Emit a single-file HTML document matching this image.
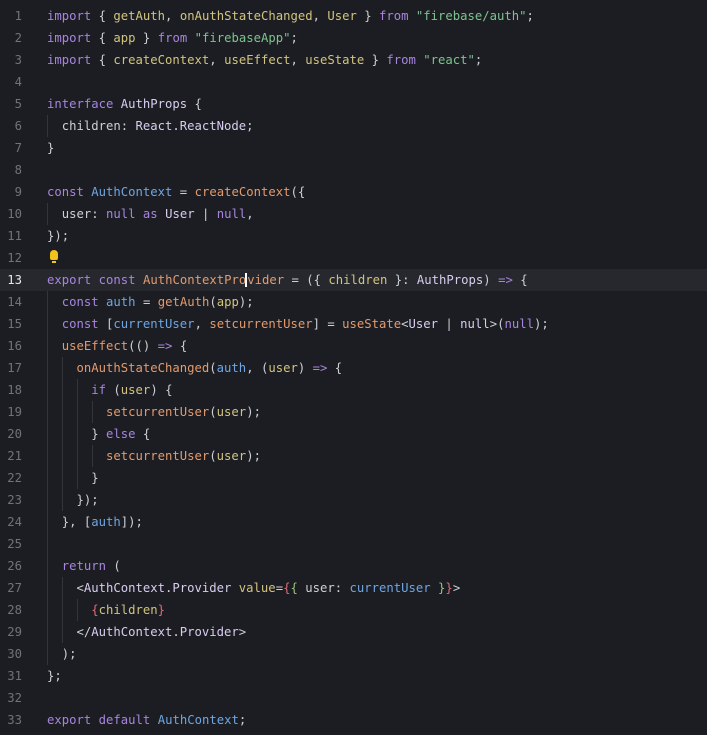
<!DOCTYPE html><html><head><style>
body{margin:0;background:#1c1d22;width:707px;height:735px;overflow:hidden;font-family:"DejaVu Sans Mono","Liberation Mono",monospace;font-size:12.25px}
.l{position:absolute;left:0;width:707px;height:22px;line-height:22px;white-space:pre;color:#cdd0d6}
.n{position:absolute;left:0;width:22px;text-align:right;color:#6f737a}
.c{position:absolute;left:47px}
.hl{background:#26282e}
.hl .n{color:#e8e8e8}
.k{color:#a884e0}.y{color:#d2c47e}.f{color:#e39a6d}.b{color:#6ea6e4}.g{color:#7cc48e}.t{color:#d8cdef}.r{color:#e06c75}.gr{color:#98c379}
.g1{position:absolute;width:1px;background:#33353b}
</style></head><body>
<div class="l" style="top:5px"><span class="n">1</span><span class="c"><span class="k">import</span> { <span class="y">getAuth</span>, <span class="y">onAuthStateChanged</span>, <span class="y">User</span> } <span class="k">from</span> <span class="g">"firebase/auth"</span>;</span></div>
<div class="l" style="top:27px"><span class="n">2</span><span class="c"><span class="k">import</span> { <span class="y">app</span> } <span class="k">from</span> <span class="g">"firebaseApp"</span>;</span></div>
<div class="l" style="top:49px"><span class="n">3</span><span class="c"><span class="k">import</span> { <span class="y">createContext</span>, <span class="y">useEffect</span>, <span class="y">useState</span> } <span class="k">from</span> <span class="g">"react"</span>;</span></div>
<div class="l" style="top:71px"><span class="n">4</span></div>
<div class="l" style="top:93px"><span class="n">5</span><span class="c"><span class="k">interface</span> <span class="t">AuthProps</span> {</span></div>
<div class="l" style="top:115px"><span class="n">6</span><span class="c">  children: <span class="t">React.ReactNode</span>;</span></div>
<div class="l" style="top:137px"><span class="n">7</span><span class="c">}</span></div>
<div class="l" style="top:159px"><span class="n">8</span></div>
<div class="l" style="top:181px"><span class="n">9</span><span class="c"><span class="k">const</span> <span class="b">AuthContext</span> = <span class="f">createContext</span>({</span></div>
<div class="l" style="top:203px"><span class="n">10</span><span class="c">  user: <span class="k">null</span> <span class="k">as</span> <span class="t">User</span> | <span class="k">null</span>,</span></div>
<div class="l" style="top:225px"><span class="n">11</span><span class="c">});</span></div>
<div class="l" style="top:247px"><span class="n">12</span><span class="c" style="left:50px;top:3px;width:8px;height:10px;border-radius:4px 4px 2px 2px;background:#f2c318"></span><span class="c" style="left:52px;top:14px;width:4px;height:2px;background:#f2c318"></span></div>
<div class="l hl" style="top:269px"><span class="n">13</span><span class="c"><span class="k">export</span> <span class="k">const</span> <span class="f">AuthContextPro<span style="border-left:2px solid #fff;margin-left:-1px">v</span>ider</span> = ({ <span class="y">children</span> }: <span class="t">AuthProps</span>) <span class="k">=&gt;</span> {</span></div>
<div class="l" style="top:291px"><span class="n">14</span><span class="c">  <span class="k">const</span> <span class="b">auth</span> = <span class="f">getAuth</span>(<span class="y">app</span>);</span></div>
<div class="l" style="top:313px"><span class="n">15</span><span class="c">  <span class="k">const</span> [<span class="b">currentUser</span>, <span class="f">setcurrentUser</span>] = <span class="f">useState</span>&lt;<span class="t">User</span> | <span class="t">null</span>&gt;(<span class="k">null</span>);</span></div>
<div class="l" style="top:335px"><span class="n">16</span><span class="c">  <span class="f">useEffect</span>(() <span class="k">=&gt;</span> {</span></div>
<div class="l" style="top:357px"><span class="n">17</span><span class="c">    <span class="f">onAuthStateChanged</span>(<span class="b">auth</span>, (<span class="y">user</span>) <span class="k">=&gt;</span> {</span></div>
<div class="l" style="top:379px"><span class="n">18</span><span class="c">      <span class="k">if</span> (<span class="y">user</span>) {</span></div>
<div class="l" style="top:401px"><span class="n">19</span><span class="c">        <span class="f">setcurrentUser</span>(<span class="y">user</span>);</span></div>
<div class="l" style="top:423px"><span class="n">20</span><span class="c">      } <span class="k">else</span> {</span></div>
<div class="l" style="top:445px"><span class="n">21</span><span class="c">        <span class="f">setcurrentUser</span>(<span class="y">user</span>);</span></div>
<div class="l" style="top:467px"><span class="n">22</span><span class="c">      }</span></div>
<div class="l" style="top:489px"><span class="n">23</span><span class="c">    });</span></div>
<div class="l" style="top:511px"><span class="n">24</span><span class="c">  }, [<span class="b">auth</span>]);</span></div>
<div class="l" style="top:533px"><span class="n">25</span></div>
<div class="l" style="top:555px"><span class="n">26</span><span class="c">  <span class="k">return</span> (</span></div>
<div class="l" style="top:577px"><span class="n">27</span><span class="c">    &lt;<span class="t">AuthContext.Provider</span> <span class="y">value</span>=<span class="r">{</span><span class="gr">{</span> user: <span class="b">currentUser</span> <span class="gr">}</span><span class="r">}</span>&gt;</span></div>
<div class="l" style="top:599px"><span class="n">28</span><span class="c">      <span class="r">{</span><span class="y">children</span><span class="r">}</span></span></div>
<div class="l" style="top:621px"><span class="n">29</span><span class="c">    &lt;/<span class="t">AuthContext.Provider</span>&gt;</span></div>
<div class="l" style="top:643px"><span class="n">30</span><span class="c">  );</span></div>
<div class="l" style="top:665px"><span class="n">31</span><span class="c">};</span></div>
<div class="l" style="top:687px"><span class="n">32</span></div>
<div class="l" style="top:709px"><span class="n">33</span><span class="c"><span class="k">export</span> <span class="k">default</span> <span class="b">AuthContext</span>;</span></div>
<div class="g1" style="left:47px;top:115px;height:22px"></div>
<div class="g1" style="left:47px;top:203px;height:22px"></div>
<div class="g1" style="left:47px;top:291px;height:374px"></div>
<div class="g1" style="left:62px;top:357px;height:154px"></div>
<div class="g1" style="left:62px;top:577px;height:66px"></div>
<div class="g1" style="left:77px;top:379px;height:110px"></div>
<div class="g1" style="left:77px;top:599px;height:22px"></div>
<div class="g1" style="left:92px;top:401px;height:22px"></div>
<div class="g1" style="left:92px;top:445px;height:22px"></div>
</body></html>
